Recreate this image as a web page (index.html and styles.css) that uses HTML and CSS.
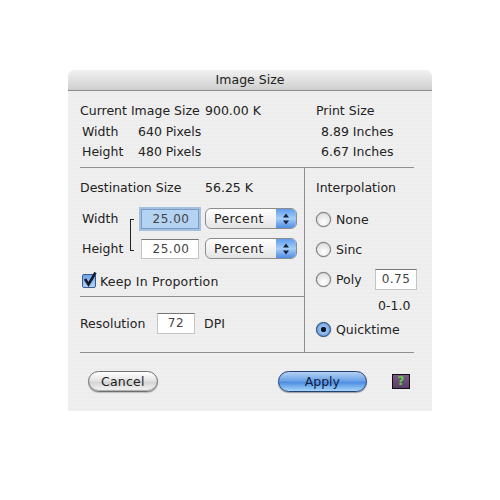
FILE: index.html
```html
<!DOCTYPE html>
<html lang="en">
<head>
    <meta charset="UTF-8">
    <title>Image Size</title>
    <link rel="stylesheet" href="styles.css">
</head>
<body>
    <div class="dialog">
        <div class="title-bar">Image Size</div>

        <div class="info-section">
            <div class="info-left">
                <div class="row head-row"><span class="current-label">Current Image Size</span><span>900.00 K</span></div>
                <div class="row sub-row"><span class="info-label">Width</span><span>640 Pixels</span></div>
                <div class="row sub-row"><span class="info-label">Height</span><span>480 Pixels</span></div>
            </div>
            <div class="info-right">
                <div class="row head-row">Print Size</div>
                <div class="row sub-row">8.89 Inches</div>
                <div class="row sub-row">6.67 Inches</div>
            </div>
        </div>

        <div class="middle-section">
            <div class="left-panel">
                <div class="dest-area">
                    <div class="row dest-head"><span class="dest-label">Destination Size</span><span>56.25 K</span></div>
                    <div class="size-fields">
                        <div class="size-row">
                            <span class="size-label">Width</span>
                            <span class="text-field size-field focused">25.00</span>
                            <div class="popup">Percent<span class="popup-arrows"><svg width="8" height="14" viewBox="0 0 8 14"><path d="M4 1.5 7 5.5H1zM4 12.5 1 8.5H7z" fill="#17233f"/></svg></span></div>
                        </div>
                        <div class="size-row second">
                            <span class="size-label">Height</span>
                            <span class="text-field size-field">25.00</span>
                            <div class="popup">Percent<span class="popup-arrows"><svg width="8" height="14" viewBox="0 0 8 14"><path d="M4 1.5 7 5.5H1zM4 12.5 1 8.5H7z" fill="#17233f"/></svg></span></div>
                        </div>
                        <span class="link-bracket"></span>
                    </div>
                    <div class="row keep-row">
                        <span class="checkbox"><svg width="15" height="15" viewBox="0 0 15 15"><path d="M3 7 6.5 12.5 13.5 0.5" fill="none" stroke="#111a2e" stroke-width="2.6"/></svg></span>
                        Keep In Proportion
                    </div>
                </div>
                <div class="row resolution-row">
                    <span class="res-label">Resolution</span>
                    <span class="text-field res-field">72</span>
                    <span>DPI</span>
                </div>
            </div>

            <div class="right-panel">
                <div class="row interp-head">Interpolation</div>
                <div class="row radio-row"><span class="radio"></span>None</div>
                <div class="row radio-row"><span class="radio"></span>Sinc</div>
                <div class="row radio-row">
                    <span class="radio"></span><span class="poly-label">Poly</span>
                    <span class="text-field poly-field">0.75</span>
                </div>
                <div class="row range-row">0-1.0</div>
                <div class="row radio-row"><span class="radio selected"></span>Quicktime</div>
            </div>
        </div>

        <div class="button-section">
            <button class="btn cancel-btn">Cancel</button>
            <button class="btn apply-btn">Apply</button>
            <span class="help-icon">?</span>
        </div>
    </div>
</body>
</html>
```

FILE: styles.css
```css
/* Page and dialog shell */
body {
    margin: 0;
    padding: 70px 68px 0;
    background-color: #fff;
    color: #222;
    font-family: "DejaVu Sans", sans-serif;
    font-size: 12.5px;
}

.dialog {
    width: 364px;
    height: 341px;
    background-color: #eeeeee;
    background-image: repeating-linear-gradient(#efefef 0, #efefef 2px, #ededed 2px, #ededed 4px);
    border-radius: 7px 7px 0 0;
}

.title-bar {
    height: 20px;
    line-height: 20px;
    text-align: center;
    background: linear-gradient(#f1f1f1, #cfcfcf);
    border-bottom: 1px solid #8b8b8b;
    border-radius: 7px 7px 0 0;
}

.row {
    display: flex;
    align-items: center;
}

/* Current size block */
.info-section {
    display: flex;
    height: 76px;
    margin: 0 18px 0 12px;
    border-bottom: 1px solid #8e8e8e;
}
.info-left {
    width: 236px;
}
.head-row {
    height: 20px;
    margin-top: 9px;
    margin-bottom: 1px;
}
.sub-row {
    height: 20px;
    padding-left: 2px;
}
.current-label {
    width: 125px;
}
.info-label {
    width: 56px;
}
.info-right .sub-row {
    padding-left: 5px;
}

/* Middle block */
.middle-section {
    display: flex;
    height: 184px;
    border-bottom: 1px solid #8e8e8e;
    margin: 0 18px 0 12px;
}
.left-panel {
    width: 224px;
    flex-shrink: 0;
}
.dest-area {
    box-sizing: border-box;
    height: 129px;
    padding-top: 9px;
    border-bottom: 1px solid #8e8e8e;
}
.dest-head {
    height: 20px;
}
.dest-label {
    width: 125px;
}
.size-fields {
    position: relative;
    margin-top: 11px;
}
.size-row {
    display: flex;
    align-items: center;
    height: 21px;
    padding-left: 2px;
}
.size-row.second {
    margin-top: 9px;
}
.size-label {
    width: 59px;
}
.link-bracket {
    position: absolute;
    left: 50px;
    top: 11px;
    width: 3px;
    height: 30px;
    border: 1px solid #222;
    border-right: none;
}
.text-field {
    box-sizing: border-box;
    display: block;
    background-color: #fff;
    border: 1px solid #c4c4c4;
    border-top-color: #777;
    color: #444;
    font-size: 12px;
    letter-spacing: 0.5px;
    text-align: center;
}
.size-field {
    width: 58px;
    height: 20px;
    line-height: 18px;
    padding-left: 2px;
}
.size-field.focused {
    background-color: #b4d2f2;
    border: 1px solid #7a9cc4;
    outline: 2px solid #a4c0e0;
}
.popup {
    box-sizing: border-box;
    position: relative;
    display: flex;
    align-items: center;
    width: 92px;
    height: 21px;
    margin-left: 6px;
    padding-left: 8px;
    background: linear-gradient(#ffffff, #e4e4e4);
    border: 1px solid #8c8c8c;
    border-radius: 6px;
    letter-spacing: 0.4px;
    overflow: hidden;
}
.popup-arrows {
    position: absolute;
    top: 0;
    right: 0;
    bottom: 0;
    width: 20px;
    display: flex;
    align-items: center;
    justify-content: center;
    background: linear-gradient(#5f9ded, #a5cdf6 50%, #4f8de6);
}
.keep-row {
    margin-top: 12px;
    padding-left: 2px;
    height: 20px;
    letter-spacing: 0.2px;
}
.checkbox {
    box-sizing: border-box;
    width: 14px;
    height: 14px;
    margin-right: 4px;
    background: linear-gradient(#6fa5e4, #b4d2f2);
    border: 1px solid #355c94;
    border-radius: 2px;
}
.checkbox svg {
    display: block;
    margin: -3px 0 0 -1px;
}
.resolution-row {
    margin-top: 16px;
    height: 21px;
}
.res-label {
    width: 77px;
}
.res-field {
    width: 38px;
    height: 21px;
    line-height: 19px;
    margin-right: 9px;
}

/* Interpolation column */
.right-panel {
    flex: 1;
    border-left: 1px solid #8e8e8e;
    padding-left: 11px;
}
.interp-head {
    height: 20px;
    margin-top: 9px;
    margin-bottom: 12px;
}
.radio-row {
    height: 20px;
    margin-bottom: 10px;
}
.radio {
    box-sizing: border-box;
    width: 15px;
    height: 15px;
    margin-right: 5px;
    border-radius: 50%;
    border: 1px solid #6d6d6d;
    background: radial-gradient(circle at 50% 70%, #ffffff, #d6d6d6);
    box-shadow: 0 0 1px #888;
}
.radio.selected {
    border-color: #23406e;
    background: radial-gradient(circle, #10182c 0, #10182c 2.5px, #9cc4f0 3px, #4c86d6 100%);
}
.poly-label {
    width: 39px;
}
.poly-field {
    width: 42px;
    height: 21px;
    line-height: 19px;
    flex-shrink: 0;
}
.range-row {
    height: 20px;
    margin-top: -4px;
    margin-bottom: 4px;
    padding-left: 62px;
}

/* Bottom buttons */
.button-section {
    display: flex;
    align-items: center;
    height: 56px;
    padding: 0 22px 0 20px;
}
.btn {
    box-sizing: border-box;
    height: 21px;
    padding: 0;
    font-family: inherit;
    font-size: 12.5px;
    border-radius: 11px;
}
.cancel-btn {
    width: 70px;
    color: #222;
    background: linear-gradient(#ffffff, #e4e4e4 45%, #d4d4d4 55%, #f8f8f8);
    border: 1px solid #6f6f6f;
    box-shadow: inset 0 -1px 1px #aaa, 0 1px 1px #bbb;
    letter-spacing: 0.2px;
}
.apply-btn {
    width: 90px;
    margin-left: 120px;
    color: #10213f;
    background: linear-gradient(#b4d0f2, #6ea4e8 45%, #4f8ee2 55%, #a6d6fb);
    border: 1px solid #24406e;
    box-shadow: 0 1px 1px #99a;
    font-weight: 500;
}
.help-icon {
    box-sizing: border-box;
    width: 18px;
    height: 15px;
    margin-left: 25px;
    background: linear-gradient(#7a5a86, #5a3e66);
    border: 1px solid #140d16;
    color: #5fd040;
    font-size: 12px;
    font-weight: bold;
    line-height: 13px;
    text-align: center;
}
```
